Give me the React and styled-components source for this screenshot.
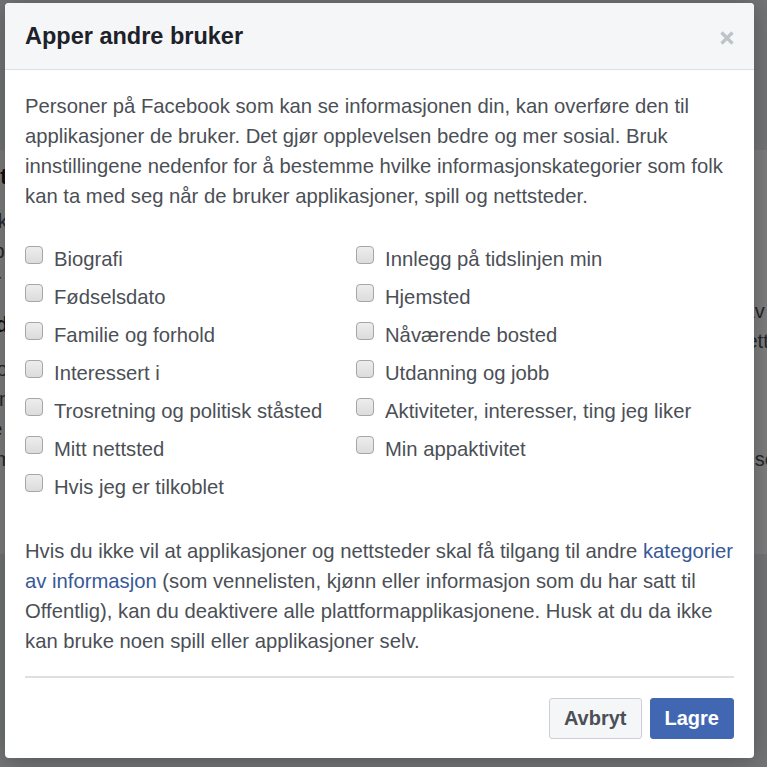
import styled, { createGlobalStyle } from "styled-components"

const Global = createGlobalStyle`
    html, body {
        margin:0;
        padding:0;
        width:767px;
        height:767px;
        overflow:hidden;
        font-family: "Liberation Sans", Arial, sans-serif;
    }
`

const Screen = styled.div`
    position:relative;
    width:767px;
    height:767px;
    overflow:hidden;
    background-color:#e9ebee;
`

const Page = styled.div`
    display:grid;
    grid-template-columns: 420px 480px;
    gap:20px;
    margin-left:-120px;
    padding-top:150px;
`

const Card = styled.div`
    background-color:white;
    padding:12px 20px 20px;
    display:flex;
    flex-direction:column;
    gap:14px;
    color:#4b4f56;
    font-size:20px;
    line-height:30px;
`

const CardTitle = styled.div`
    font-weight:bold;
    color:#1d2129;
    font-size:22px;
`

const Overlay = styled.div`
    position:absolute;
    inset:0;
    background-color:rgba(0,0,0,0.5);
`

const Dialog = styled.div`
    position:absolute;
    left:5px;
    top:3px;
    width:749px;
    background-color:white;
    border-radius:4px;
    box-shadow:0 2px 26px rgba(0,0,0,.3);
    overflow:hidden;
`

const Header = styled.div`
    height:66px;
    background-color:#f5f6f7;
    border-bottom:1px solid #dddfe2;
    display:flex;
    align-items:center;
    justify-content:space-between;
    padding:0 20px;
`

const Title = styled.h2`
    margin:0;
    font-size:23.5px;
    font-weight:bold;
    color:#1d2129;
`

const Close = styled.div`
    width:18px;
    height:18px;
    display:flex;
    align-items:center;
    justify-content:center;
    margin-right:-2px;
    margin-top:4px;
    cursor:pointer;
`

const Body = styled.div`
    padding:21px 20px 19px;
    color:#4b4f56;
    font-size:20.25px;
    line-height:30px;
`

const Text = styled.p`
    margin:0;
`

const Link = styled.a`
    color:#385898;
    text-decoration:none;
`

const Options = styled.div`
    display:grid;
    grid-template-columns: 331px 1fr;
    grid-auto-flow:column;
    grid-template-rows: repeat(7, 38px);
    margin:29px 0 30px;
`

const Option = styled.label`
    display:flex;
    align-items:center;
    gap:11px;
    height:38px;
    white-space:nowrap;
`

const Box = styled.span`
    width:18px;
    height:18px;
    box-sizing:border-box;
    border:1px solid #a6a6a6;
    border-radius:4px;
    background:linear-gradient(#ededed, #dcdcdc);
    margin-top:-9px;
    flex-shrink:0;
`

const Divider = styled.div`
    height:2px;
    background-color:#dddfe2;
    margin:20px 0 20px;
`

const Buttons = styled.div`
    display:flex;
    justify-content:flex-end;
    gap:8px;
`

const Button = styled.button`
    height:41px;
    padding:0 14px;
    font-family:"Liberation Sans", Arial, sans-serif;
    font-size:20px;
    font-weight:bold;
    border-radius:3px;
    border:1px solid ${props => props.primary ? "#4267b2" : "#ccd0d5"};
    background-color:${props => props.primary ? "#4267b2" : "#f5f6f7"};
    color:${props => props.primary ? "white" : "#4b4f56"};
    cursor:pointer;
`

const left = [
    "Biografi",
    "Fødselsdato",
    "Familie og forhold",
    "Interessert i",
    "Trosretning og politisk ståsted",
    "Mitt nettsted",
    "Hvis jeg er tilkoblet",
]

const right = [
    "Innlegg på tidslinjen min",
    "Hjemsted",
    "Nåværende bosted",
    "Utdanning og jobb",
    "Aktiviteter, interesser, ting jeg liker",
    "Min appaktivitet",
]

export default () => {
    return (
        <Screen>
            <Global/>
            <Page>
                <Card>
                    <CardTitle>Apper, nettsteder og spill</CardTitle>
                    <div>Du kan bruke Facebook-kontoen din til å logge på apper, nettsteder og spill. Administrer hvilke apper som har tilgang.</div>
                    <CardTitle>Apper andre bruker</CardTitle>
                    <div>Personer som kan se informasjonen din, kan ta den med seg når de bruker apper. Bruk denne innstillingen for å kontrollere hvilke informasjonskategorier folk kan ta med.</div>
                </Card>
                <Card>
                    <CardTitle>Gamle versjoner av Facebook for mobil</CardTitle>
                    <div>Denne innstillingen styrer personvernet for ting du legger ut med gamle Facebook-apper for mobil som ikke har den innebygde publikumsvelgeren, f.eks. utdaterte versjoner av Facebook for BlackBerry. Du kan ikke endre dette i appen selv.</div>
                    <CardTitle>Instant Personalization</CardTitle>
                    <div>Lar partnernettsteder tilby en tilpasset opplevelse med deres innebygd publikumsvelger, f.eks. utdaterte versjoner.</div>
                </Card>
            </Page>
            <Overlay/>
            <Dialog>
                <Header>
                    <Title>Apper andre bruker</Title>
                    <Close>
                        <svg width="16" height="16" viewBox="0 0 16 16">
                            <path d="M2.5 2.5 L13.5 13.5 M13.5 2.5 L2.5 13.5" stroke="#bec3c9" strokeWidth="3.2"/>
                        </svg>
                    </Close>
                </Header>
                <Body>
                    <Text>
                        Personer på Facebook som kan se informasjonen din, kan overføre den til applikasjoner de bruker. Det gjør opplevelsen bedre og mer sosial. Bruk innstillingene nedenfor for å bestemme hvilke informasjonskategorier som folk kan ta med seg når de bruker applikasjoner, spill og nettsteder.
                    </Text>
                    <Options>
                        {left.map((l) =>
                            <Option key={l}><Box/>{l}</Option>
                        )}
                        {right.map((r) =>
                            <Option key={r}><Box/>{r}</Option>
                        )}
                    </Options>
                    <Text>
                        Hvis du ikke vil at applikasjoner og nettsteder skal få tilgang til andre <Link href="#">kategorier av informasjon</Link> (som vennelisten, kjønn eller informasjon som du har satt til Offentlig), kan du deaktivere alle plattformapplikasjonene. Husk at du da ikke kan bruke noen spill eller applikasjoner selv.
                    </Text>
                    <Divider/>
                    <Buttons>
                        <Button>Avbryt</Button>
                        <Button primary>Lagre</Button>
                    </Buttons>
                </Body>
            </Dialog>
        </Screen>
    )
}
